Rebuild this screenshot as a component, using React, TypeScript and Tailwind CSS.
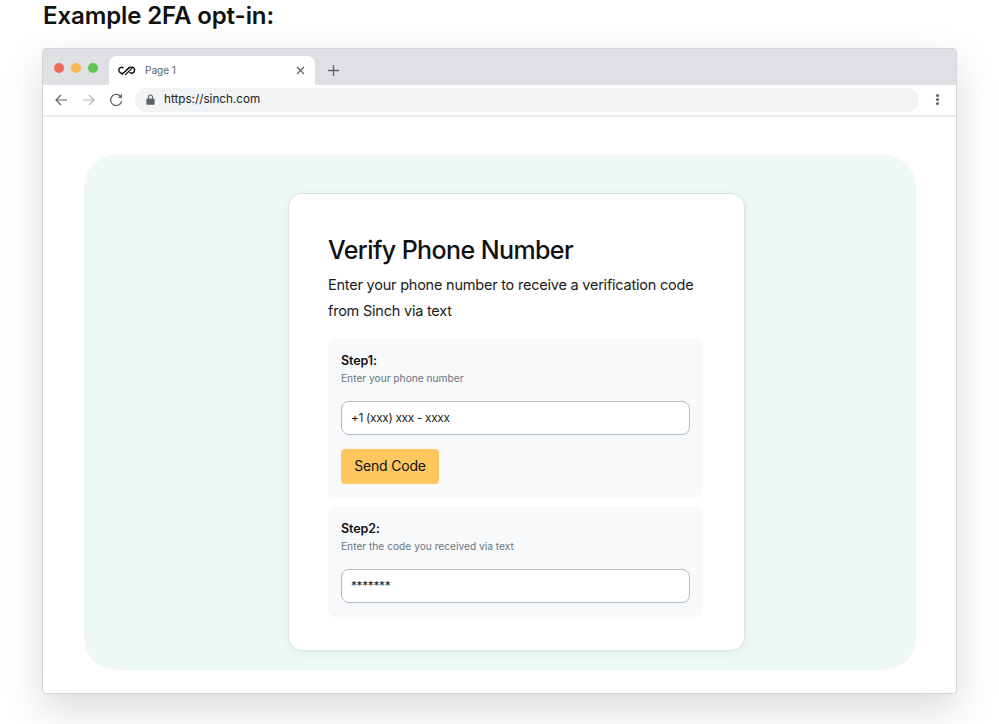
import React from "react";

function Logo() {
  return (
    <svg width="18" height="10" viewBox="0 0 18 10" fill="none" stroke="#111" strokeWidth="1.4">
      <path d="M5.500 2.100C4.500 1.300 3.200 1.100 2.300 1.700 1 2.500.7 4.300 1.300 5.600c.7 1.400 2.500 2 4 1.300 2-1 3.800-4 6-5.200 1.800-.9 4.200-.7 5 1 .8 1.600 0 3.800-1.700 4.300-1.200.4-2.400 0-3.200-.7" />
      <path d="M3.800 8.800 11.200 1.500M7.200 9l7.300-7.300" strokeWidth="1.100" />
    </svg>
  );
}

function Step({ title, sub, value, children, className }: { title: string; sub: string; value: string; children?: React.ReactNode; className: string }) {
  return (
    <div className={`bg-[#f8f9fb] rounded-lg px-[13px] pt-[14px] ${className}`}>
      <div className="text-[12.5px] leading-[18px] font-semibold tracking-[-0.1px] text-[#111]">{title}</div>
      <div className="text-[10.2px] leading-[16px] text-[#6b7480]">{sub}</div>
      <div className="mt-[15px] h-[34px] w-[349px] bg-white border border-[#b4bcc6] rounded-lg pl-[9px] pt-[1px] flex items-center text-[11.8px] tracking-[-0.3px] text-[#1a1a1a]">{value}</div>
      {children}
    </div>
  );
}

export default function App() {
  return (
    <div className="w-[999px] h-[724px] bg-white overflow-hidden font-['Inter','Liberation_Sans',sans-serif] pl-[42px]">
      <h1 className="pl-[1px] h-[48px] pt-[1px] text-[24px] leading-[30px] font-semibold tracking-[-0.1px] text-[#111]">Example 2FA opt-in:</h1>
      <div className="w-[915px] h-[646px] bg-white border border-[#d4d4d6] rounded-[4px] overflow-hidden shadow-[0_16px_40px_rgba(0,0,0,0.15)]">
        <div className="h-[36px] bg-[#dfe0e4] flex items-end">
          <div className="flex gap-[7px] pl-[11px] pb-[12px] w-[66px]">
            <span className="w-[10px] h-[10px] rounded-full bg-[#f0695f]" />
            <span className="w-[10px] h-[10px] rounded-full bg-[#f7b84b]" />
            <span className="w-[10px] h-[10px] rounded-full bg-[#61c354]" />
          </div>
          <div className="w-[206px] h-[29px] bg-white rounded-t-[8px] flex items-center pl-[9px] pr-[10px]">
            <Logo />
            <span className="ml-[9px] text-[10px] text-[#5f6368]">Page 1</span>
            <svg className="ml-auto" width="9" height="9" viewBox="0 0 9 9" stroke="#5f6368" strokeWidth="1.1">
              <path d="M1 1l7 7M8 1l-7 7" />
            </svg>
          </div>
          <svg className="ml-[13px] mb-[9px]" width="11" height="11" viewBox="0 0 11 11" stroke="#5f6368" strokeWidth="1.3">
            <path d="M5.500 0v11M0 5.500h11" />
          </svg>
        </div>
        <div className="h-[32px] bg-white border-b-2 border-[#ebebed] flex items-center pb-[1px]">
          <svg className="ml-[12px]" width="13" height="12" viewBox="0 0 13 12" fill="none" stroke="#5f6368" strokeWidth="1.2">
            <path d="M12 6H1.200M6 1 1 6l5 5" />
          </svg>
          <svg className="ml-[14px]" width="13" height="12" viewBox="0 0 13 12" fill="none" stroke="#b4b6ba" strokeWidth="1.2">
            <path d="M1 6h10.800M7 1l5 5-5 5" />
          </svg>
          <svg className="ml-[14px]" width="14" height="14" viewBox="0 0 13 13" fill="none" stroke="#5f6368" strokeWidth="1.2">
            <path d="M11.300 4A5.200 5.200 0 1 0 11.800 7.500" />
            <path d="M12 .8V4.600H8.200" fill="#5f6368" stroke="none" />
          </svg>
          <div className="ml-[12px] w-[784px] h-[24px] bg-[#f1f3f4] rounded-full flex items-center pl-[11px]">
            <svg width="9" height="11" viewBox="0 0 9 11" fill="#5f6368">
              <path d="M1 4.500h1V3a2.500 2.500 0 0 1 5 0v1.500h1a.6.6 0 0 1 .6.6v5a.6.6 0 0 1-.6.6H1a.6.6 0 0 1-.6-.6v-5a.6.6 0 0 1 .6-.6zM3 4.500h3V3a1.500 1.500 0 0 0-3 0z" />
            </svg>
            <span className="ml-[9px] pt-[1px] text-[11.7px] text-[#202124]">https://sinch.com</span>
          </div>
          <div className="ml-[17px] flex flex-col gap-[1.500px]">
            <span className="w-[2.500px] h-[2.500px] rounded-full bg-[#5f6368]" />
            <span className="w-[2.500px] h-[2.500px] rounded-full bg-[#5f6368]" />
            <span className="w-[2.500px] h-[2.500px] rounded-full bg-[#5f6368]" />
          </div>
        </div>
        <div className="pt-[38px] pl-[41px]">
          <div className="w-[832px] h-[515px] bg-[#eff9f4] rounded-[32px] pt-[38px] pl-[204px]">
            <div className="w-[457px] h-[458px] bg-white rounded-[14px] border border-[#d8e6e1] shadow-[0_2px_10px_rgba(0,0,0,0.06)] pl-[39px] pr-[41px] pt-[38px]">
              <h2 className="text-[25px] leading-[36px] font-medium tracking-[-0.6px] text-[#111]">Verify Phone Number</h2>
              <p className="mt-[4px] text-[14.5px] leading-[26px] tracking-[-0.22px] whitespace-nowrap text-[#1a1a1a]">
                Enter your phone number to receive a verification code<br />from Sinch via text
              </p>
              <Step className="mt-[14px] h-[160px]" title="Step1:" sub="Enter your phone number" value="+1 (xxx) xxx - xxxx">
                <div className="mt-[14px] w-[98px] h-[35px] pb-[3px] bg-[#ffc85f] rounded-[4px] flex items-center justify-center text-[14px] tracking-[-0.2px] text-[#111]">Send Code</div>
              </Step>
              <Step className="mt-[8px] h-[111px]" title="Step2:" sub="Enter the code you received via text" value="*******" />
            </div>
          </div>
        </div>
      </div>
    </div>
  );
}
